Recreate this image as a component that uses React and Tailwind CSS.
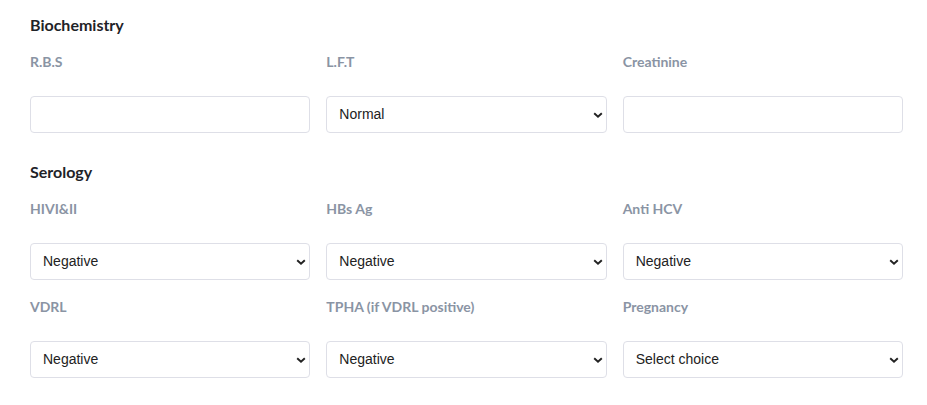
import React from "react";

const Chevron = () => (
  <svg className="pointer-events-none absolute right-[4px] top-1/2 -translate-y-1/2" width="10" height="10" viewBox="0 0 10 10">
    <path d="M1.2 3.2 L5 6.8 L8.8 3.2" fill="none" stroke="#222" strokeWidth="1.9" />
  </svg>
);

function Field({ label, value, select }) {
  return (
    <div className="flex flex-col">
      <div className="text-[14px] leading-[18px] font-bold text-[#8a94a4]">{label}</div>
      {select ? (
        <div className="relative mt-[25px]">
          <select
            defaultValue={value}
            className="h-[37px] w-full appearance-none rounded-[4px] border border-[#dedfe7] bg-white pl-[12px] pr-8 text-[14px] text-[#222] outline-none [font-family:'Liberation_Sans',Arial,sans-serif]"
          >
            <option>{value}</option>
          </select>
          <Chevron />
        </div>
      ) : (
        <input className="mt-[25px] h-[37px] w-full rounded-[4px] border border-[#dedfe7] bg-white px-3 outline-none" />
      )}
    </div>
  );
}

export default function App() {
  return (
    <div className="min-h-[405px] bg-white pl-[30px] pr-[24px] pt-[15px] [font-family:Lato,'Open_Sans',sans-serif]">
      <h2 className="text-[16px] leading-[20px] font-bold text-[#1f2328]">Biochemistry</h2>
      <div className="mt-[18px] grid grid-cols-3 gap-x-[16px] gap-y-[18px]">
        <Field label="R.B.S" />
        <Field label="L.F.T" value="Normal" select />
        <Field label="Creatinine" />
      </div>
      <h2 className="mt-[29px] text-[16px] leading-[20px] font-bold text-[#1f2328]">Serology</h2>
      <div className="mt-[18px] grid grid-cols-3 gap-x-[16px] gap-y-[18px]">
        <Field label="HIVI&II" value="Negative" select />
        <Field label="HBs Ag" value="Negative" select />
        <Field label="Anti HCV" value="Negative" select />
        <Field label="VDRL" value="Negative" select />
        <Field label="TPHA (if VDRL positive)" value="Negative" select />
        <Field label="Pregnancy" value="Select choice" select />
      </div>
    </div>
  );
}
